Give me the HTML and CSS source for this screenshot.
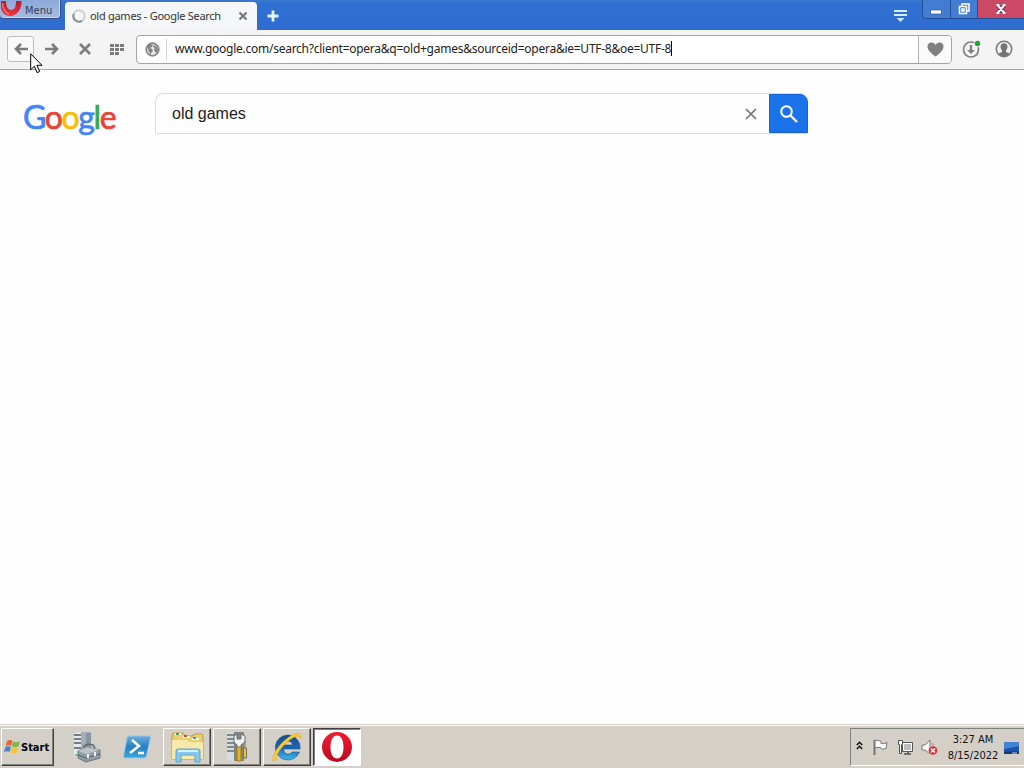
FILE: index.html
```html
<!DOCTYPE html>
<html lang="en">
<head>
  <meta charset="UTF-8" />
  <meta name="viewport" content="width=device-width, initial-scale=1" />
  <title>old games - Google Search</title>
  <link rel="stylesheet" href="styles.css">
</head>
<body>
  <div class="desktop">
    <!-- Tab bar -->
    <div class="titlebar">
      <button class="menu-btn">
        <svg width="22" height="18" viewBox="0 0 22 18">
          <defs>
            <linearGradient id="menuRed" x1="0" y1="0" x2="0" y2="1">
              <stop offset="0" stop-color="#b5202b" />
              <stop offset="1" stop-color="#ee343d" />
            </linearGradient>
          </defs>
          <path d="M1 1H6C6 6 8 10 11 10C15 10 16 6 16 1H21.500C22 9 17 16 10 16C5 16 1 12 1 7Z" fill="url(#menuRed)" />
          <path d="M2.500 3C2.500 8 5 13 9 14" fill="none" stroke="#f77e80" stroke-width="1.300" />
        </svg>
        <span>Menu</span>
      </button>
      <div class="tab">
        <svg width="16" height="16" viewBox="0 0 16 16" fill="none" stroke-width="2">
          <circle cx="8" cy="8" r="5.700" stroke="#d0d0d0" />
          <path d="M2.800 5.800A5.700 5.700 0 0 0 11 12.800" stroke="#909090" />
        </svg>
        <span class="tab-title">old games - Google Search</span>
        <svg class="tab-close" width="10" height="10" viewBox="0 0 10 10">
          <path d="M1.500 1.500l7 7M8.500 1.500l-7 7" stroke="#777" stroke-width="2.200" />
        </svg>
      </div>
      <svg class="new-tab" width="12" height="12" viewBox="0 0 12 12">
        <path d="M6 .5v11M.5 6h11" stroke="#e4f3ff" stroke-width="2.800" />
      </svg>
      <svg class="tab-menu" width="13" height="14" viewBox="0 0 13 14" fill="#d5eaff">
        <path d="M0 1h13v2H0zM0 5h13v2H0zM2.500 9h8l-4 4z" />
      </svg>
      <div class="window-btns">
        <button>
          <svg width="12" height="12" viewBox="0 0 12 12"><path d="M.5 7h11v4H.5z" fill="#fff" stroke="#24509b" stroke-width=".7" /></svg>
        </button>
        <button>
          <svg width="12" height="12" viewBox="0 0 12 12" fill="none">
            <path d="M4 3V1h7v7H9" stroke="#fff" stroke-width="1.500" />
            <path d="M1.500 3.500h7v7h-7zM4 6h2v2H4z" stroke="#fff" stroke-width="1.500" />
          </svg>
        </button>
        <button class="close-btn">
          <svg width="12" height="12" viewBox="0 0 12 12">
            <path d="M2.500 2l7 8M9.500 2l-7 8" stroke="#7a2845" stroke-width="4" />
            <path d="M2.500 2l7 8M9.500 2l-7 8M1.500 2h3M7.500 2h3M1.500 10h3M7.500 10h3" stroke="#fff" stroke-width="2" />
          </svg>
        </button>
      </div>
    </div>

    <!-- Address bar -->
    <div class="toolbar">
      <button class="nav-btn hovered">
        <svg width="14" height="12" viewBox="0 0 14 12"><path d="M7 1L2 6l5 5M2 6h12" fill="none" stroke="#7c7c7c" stroke-width="2.600" /></svg>
      </button>
      <button class="nav-btn forward">
        <svg width="14" height="12" viewBox="0 0 14 12"><path d="M7 1l5 5-5 5M12 6H0" fill="none" stroke="#7c7c7c" stroke-width="2.600" /></svg>
      </button>
      <button class="nav-btn">
        <svg width="12" height="12" viewBox="0 0 12 12"><path d="M1 1l10 10M11 1L1 11" stroke="#7c7c7c" stroke-width="2.600" /></svg>
      </button>
      <button class="nav-btn">
        <svg width="14" height="11" viewBox="0 0 14 11" fill="#7c7c7c">
          <path d="M0 0h4v3H0zM5 0h4v3H5zM10 0h4v3h-4zM0 4h4v3H0zM5 4h4v3H5zM10 4h4v3h-4zM0 8h4v3H0zM5 8h4v3H5z" />
        </svg>
      </button>
      <div class="address">
        <svg class="globe" width="15" height="15" viewBox="0 0 15 15">
          <circle cx="7.500" cy="7.500" r="6.300" fill="#e8e8e8" stroke="#858585" stroke-width="1.700" />
          <path d="M2 4l3-2 3 1-1 2-2 1 2 1 1 2-2 2v2L4 10 3 7zM9 3l3 2 1 3-1 3-2-1-1-3 1-1-2-1z" fill="#858585" />
        </svg>
        <div class="url">www.google.com/search?client=opera&amp;q=old+games&amp;sourceid=opera&amp;ie=UTF-8&amp;oe=UTF-8</div>
        <div class="bookmark">
          <svg width="17" height="15" viewBox="0 0 17 15">
            <path d="M8.500 14.500C5 12 .5 8.500.5 4.500C.5 0 6-.8 8.500 3C11-.8 16.500 0 16.500 4.500C16.500 8.500 12 12 8.500 14.500Z" fill="#808080" />
          </svg>
        </div>
      </div>
      <svg class="downloads" width="19" height="19" viewBox="0 0 19 19">
        <circle cx="9" cy="9.500" r="7.500" fill="none" stroke="#808080" stroke-width="1.700" />
        <path d="M7.800 5h2.400v5H13l-4 4-4-4h2.800z" fill="#808080" />
        <circle cx="15.500" cy="3.500" r="3.700" fill="#f3f3f3" />
        <circle cx="15.500" cy="3.500" r="2.700" fill="#1aaa2a" />
      </svg>
      <svg class="account" width="18" height="18" viewBox="0 0 18 18">
        <circle cx="9" cy="9" r="7.700" fill="#f3f3f3" stroke="#7c7c7c" stroke-width="1.600" />
        <path d="M5.500 6.500C5.500 2 12.500 2 12.500 6.500C12.500 8.500 11.800 9.500 11 10.300V12L14.500 13.500C11.500 17.500 6.500 17.500 3.500 13.500L7 12V10.300C6.200 9.500 5.500 8.500 5.500 6.500Z" fill="#747474" />
      </svg>
    </div>

    <!-- Search page -->
    <div class="page">
      <div class="logo"><span class="blue">G</span><span class="red">o</span><span class="yellow">o</span><span class="blue">g</span><span class="green">l</span><span class="red">e</span></div>
      <div class="search-box">
        <span class="query">old games</span>
        <svg class="clear" width="12" height="12" viewBox="0 0 12 12"><path d="M1 1l10 10M11 1L1 11" stroke="#70757a" stroke-width="1.700" /></svg>
        <button class="search-btn">
          <svg width="20" height="20" viewBox="0 0 20 20" fill="none" stroke="#fff">
            <circle cx="7.500" cy="7.500" r="5.300" stroke-width="2" />
            <path d="M11.500 11.500l6.500 6.500" stroke-width="2.300" />
          </svg>
        </button>
      </div>
    </div>

    <!-- Taskbar -->
    <div class="taskbar">
      <button class="start-btn">
        <svg width="17" height="16" viewBox="0 0 17 16">
          <path d="M3 2C5 .5 7 1 8.500 2L7.300 7C5.500 6 3.500 6 1.700 7Z" fill="#e96532" />
          <path d="M9.300 2.500C11.500 3.500 13.500 3.500 16 2L14.500 7.300C12.500 8.500 10 8.500 8 7.500Z" fill="#79b94a" />
          <path d="M1.400 8C3.500 7 5.200 7 7 8L5.700 12.800C4 12 2 12 0 13Z" fill="#4783cc" />
          <path d="M7.800 8.500C10 9.500 12.500 9.500 14.200 8.400L12.800 13.500C11 15 8.500 14.500 6.500 13.500Z" fill="#f5c62f" />
        </svg>
        <span>Start</span>
      </button>
      <div class="task-icon server">
        <svg width="30" height="33" viewBox="0 0 30 33">
          <path d="M8 1h11v26H8z" fill="#a5aeb5" />
          <path d="M14 2h5v24h-5z" fill="#89959e" />
          <path d="M2 2l7-1v27l-7-3z" fill="#e7eaec" />
          <path d="M2 4h7M2 8h7M2 12h7M2 17h7" stroke="#4d5860" stroke-width="1.500" />
          <path d="M3 24h4" stroke="#5dbb50" stroke-width="1.500" />
          <path d="M12 18v-3l4-2 5 1 2 3" fill="none" stroke="#5e6a73" stroke-width="1.600" />
          <path d="M6 20l9-4 13 3v8l-14 4-8-4z" fill="#929da5" stroke="#68747d" />
          <path d="M6 20l9-4 13 3-14 4z" fill="#bcc4ca" />
          <path d="M6 24l8 3 14-4" fill="none" stroke="#53616b" />
          <path d="M16 23v4M23 21v4" stroke="#eee" stroke-width="2" />
        </svg>
      </div>
      <div class="task-icon shell">
        <svg width="28" height="24" viewBox="0 0 28 24">
          <defs>
            <linearGradient id="shellBlue" x1="0" y1="0" x2="0" y2="1">
              <stop offset="0" stop-color="#69acdc" />
              <stop offset=".5" stop-color="#287fc1" />
              <stop offset="1" stop-color="#3ba8dc" />
            </linearGradient>
          </defs>
          <path d="M6 1h20q2 0 1.500 2l-4 18q-.5 2-2.500 2H2q-2 0-1.500-2L4 3q.5-2 2-2z" fill="url(#shellBlue)" stroke="#9bcbe8" />
          <path d="M9 5l7 6-9 7M15 18h6" fill="none" stroke="#fff" stroke-width="2.600" />
        </svg>
      </div>
      <div class="task-btn">
        <svg width="33" height="32" viewBox="0 0 33 32">
          <path d="M1 4q0-2 2-2h9l2 3h8l1-2h7q2 0 2 2v23H1z" fill="#e9cf72" stroke="#bc9b42" />
          <path d="M4 3h6M12 6h7M21 8h7" stroke="#fff9db" stroke-width="2" />
          <path d="M5 3h3" stroke="#4c9c58" stroke-width="2" />
          <path d="M13 5h3" stroke="#c84c3a" stroke-width="2" />
          <path d="M22 7h3" stroke="#4f8bd1" stroke-width="2" />
          <path d="M1 9h15l2 2h14v17H1z" fill="#f7e9a8" />
          <path d="M5 31V20q0-2 2-2h20q2 0 2 2v11h-5v-7H10v7z" fill="#86c8ed" stroke="#5ba4d2" />
          <path d="M7 20h20" stroke="#d5f2ff" stroke-width="2" />
        </svg>
      </div>
      <div class="task-btn">
        <svg width="24" height="32" viewBox="0 0 24 32">
          <path d="M8 1h11v29H8z" fill="#7e8582" />
          <path d="M2 2l7-1v30l-7-3z" fill="#d8dddd" />
          <path d="M2 4h7M2 8h7M2 12h7M2 16h7M2 20h7" stroke="#626d71" stroke-width="1.600" />
          <path d="M12 3v5h4V3l4 2v6l-4 3v5h-4v-5l-3-3V5z" fill="#edf0ee" stroke="#667077" />
          <path d="M12 16h4v14h-4z" fill="#e1b529" stroke="#a47b15" />
          <path d="M20 10v7M18.500 17h3v10h-3z" fill="#e8c23b" stroke="#77735d" />
        </svg>
      </div>
      <div class="task-btn">
        <svg width="30" height="32" viewBox="0 0 30 32">
          <defs>
            <linearGradient id="ieBlue" x1="0" y1="0" x2="0" y2="1">
              <stop offset="0" stop-color="#164b8d" />
              <stop offset=".5" stop-color="#1b65b4" />
              <stop offset="1" stop-color="#40b9ed" />
            </linearGradient>
          </defs>
          <path d="M15.500 4A12.500 12.500 0 0 1 28 18H11.500Q12 23 16 23Q19 23 20 21H27.500A12.500 12.500 0 1 1 15.500 4ZM11.500 14H20.500Q20 10 16 10Q12 10 11.500 14Z" fill="url(#ieBlue)" stroke="#17508a" stroke-width=".6" />
          <path d="M5 28C-2 35 0 22 10 12C19 3 30-2 29 8C28 3 21 5 13 13C6 20 3 27 5 28Z" fill="#f7cc35" stroke="#e1ab21" stroke-width=".6" />
        </svg>
      </div>
      <div class="task-btn active">
        <svg width="32" height="32" viewBox="0 0 32 32">
          <defs>
            <linearGradient id="operaRed" x1="0" y1="0" x2="0" y2="1">
              <stop offset="0" stop-color="#f51b32" />
              <stop offset="1" stop-color="#b80b21" />
            </linearGradient>
          </defs>
          <path d="M16 1A15 15 0 1 0 16 31A15 15 0 1 0 16 1ZM16 4.500C20 4.500 22.500 9 22.500 16S20 27.500 16 27.500S9.500 23 9.500 16S12 4.500 16 4.500Z" fill="url(#operaRed)" fill-rule="evenodd" />
        </svg>
      </div>

      <div class="tray">
        <svg class="chevrons" width="7" height="9" viewBox="0 0 7 9"><path d="M.8 4l2.700-2.700L6.200 4M.8 8l2.700-2.700L6.200 8" fill="none" stroke="#111" stroke-width="1.500" /></svg>
        <svg class="flag" width="17" height="17" viewBox="0 0 17 17">
          <path d="M2.500 1v15" stroke="#777" stroke-width="2" />
          <path d="M3 1.500q3-1 6 1v2q3 1 6-1l-1 6q-3 2-6-1Q5 8 3 9z" fill="#fff" stroke="#777" />
        </svg>
        <svg class="network" width="17" height="17" viewBox="0 0 17 17">
          <path d="M5.500 3.500h10v9h-10z" fill="#bbb" stroke="#555" />
          <path d="M6.500 4.500h8v7h-8z" fill="none" stroke="#fff" />
          <path d="M7 15h7M11 13v2" stroke="#555" stroke-width="1.600" />
          <path d="M1.500 1.500h4v4h-1v9h-2v-9h-1z" fill="#fff" stroke="#555" />
        </svg>
        <svg class="sound" width="18" height="17" viewBox="0 0 18 17">
          <path d="M1 6h3l5-5v14l-5-4H1z" fill="#f5f5f5" stroke="#777" />
          <path d="M11 4q2 2 1 4" fill="none" stroke="#888" />
          <circle cx="12" cy="11.500" r="4.700" fill="#d92f35" stroke="#eee" stroke-width=".6" />
          <path d="M10 9.500l4 4M14 9.500l-4 4" stroke="#fff" stroke-width="1.600" />
        </svg>
        <div class="clock">
          <div>3:27 AM</div>
          <div>8/15/2022</div>
        </div>
        <svg class="show-desktop" width="15" height="13" viewBox="0 0 15 13">
          <path d="M0 0h15v11H0z" fill="#1d55ae" />
          <path d="M0 0h15v4L0 7z" fill="#4682d2" />
          <path d="M0 9.500h15V12H0z" fill="#183867" />
          <path d="M8 11h5" stroke="#c7dcf4" />
        </svg>
      </div>
    </div>

    <svg class="cursor" width="13" height="21" viewBox="0 0 13 21">
      <path d="M.7.8v16l3.600-3.500 2.800 6.400 2.600-1.200-2.800-6.200H12z" fill="#fff" stroke="#000" />
    </svg>
  </div>
</body>
</html>
```
FILE: styles.css
```css
* {
  box-sizing: border-box;
}
body {
  margin: 0;
  font-family: "DejaVu Sans Condensed", "DejaVu Sans", sans-serif;
  color: #111;
}
button {
  border: none;
  background: none;
  padding: 0;
  font-family: inherit;
}
svg {
  display: block;
  flex-shrink: 0;
}
.desktop {
  position: relative;
  display: flex;
  flex-direction: column;
  width: 1024px;
  height: 768px;
  overflow: hidden;
  background: #fefefe;
}

/* tab bar */
.titlebar {
  display: flex;
  height: 30px;
  background: linear-gradient(#3c78ce 0, #2f70d2 4px, #2e6dcf 100%);
}
.menu-btn {
  display: flex;
  width: 61px;
  height: 19px;
  border: 1px solid #34518d;
  border-top: none;
  border-left: none;
  border-radius: 0 0 4px 4px;
  background: linear-gradient(#8caadd, #a9bbdc);
  box-shadow: inset -1px -1px #c9d8f1;
  color: #323c59;
  font-size: 11px;
  line-height: 21px;
}
.menu-btn span {
  margin-left: 3px;
}
.tab {
  display: flex;
  align-items: center;
  width: 192px;
  height: 28px;
  margin: 2px 0 0 4px;
  padding: 0 9px 0 6px;
  border-radius: 4px 4px 0 0;
  background: #f5f6f7;
  color: #333;
}
.tab-title {
  margin: -2px 0 0 3px;
  font-family: "Noto Sans", sans-serif;
  font-size: 11px;
  letter-spacing: -0.28px;
  white-space: nowrap;
}
.tab-close {
  margin-left: auto;
}
.new-tab {
  margin: 10px 0 0 10px;
}
.tab-menu {
  margin: 9px 15px 0 auto;
}
.window-btns {
  display: flex;
  width: 102px;
  height: 19px;
  border: 1px solid #244f98;
  border-top: none;
  border-right: none;
  border-radius: 0 0 0 4px;
  overflow: hidden;
}
.window-btns button {
  display: flex;
  justify-content: center;
  width: 28px;
  padding-top: 3px;
  border-right: 1px solid #244f98;
  background: #427dd2;
}
.window-btns .close-btn {
  width: 46px;
  border: none;
  background: #cb4965;
}

/* address bar */
.toolbar {
  display: flex;
  align-items: center;
  height: 40px;
  padding: 0 11px 1px 7px;
  border-bottom: 1px solid #a9a9a9;
  background: #f4f4f4;
}
.nav-btn {
  display: flex;
  align-items: center;
  justify-content: center;
  width: 27px;
  height: 26px;
  margin-right: 5px;
}
.nav-btn.hovered {
  border: 1px solid #bdbdbd;
  border-radius: 3px;
  background: #f9f9f9;
}
.nav-btn.forward {
  padding-right: 2px;
}
.address {
  display: flex;
  align-items: center;
  width: 816px;
  height: 29px;
  margin-left: 1px;
  border: 1px solid #a4a4a4;
  border-radius: 4px;
  background: #fff;
}
.globe {
  margin-left: 8px;
}
.url {
  height: 21px;
  margin-left: 6px;
  padding-left: 8px;
  border-left: 1px solid #d4d4d4;
  font-family: "Noto Sans", sans-serif;
  font-size: 12px;
  letter-spacing: -0.26px;
  line-height: 19px;
  white-space: nowrap;
  color: #222;
}
.url::after {
  content: "";
  display: inline-block;
  width: 1px;
  height: 15px;
  background: #000;
  vertical-align: -3px;
}
.bookmark {
  display: flex;
  align-items: center;
  justify-content: center;
  width: 33px;
  height: 27px;
  margin-left: auto;
  border-left: 1px solid #b2b2b2;
  border-radius: 0 3px 3px 0;
  background: #fafafa;
}
.downloads {
  margin-left: 10px;
}
.account {
  margin-left: auto;
}

/* search page */
.page {
  flex: 1;
  display: flex;
  align-items: flex-start;
  padding: 23px 0 0 23px;
}
.logo {
  width: 132px;
  font-family: Lato, sans-serif;
  font-size: 32px;
  letter-spacing: -1.4px;
  line-height: 48px;
  -webkit-text-stroke: 0.7px;
}
.blue { color: #4285f4; }
.red { color: #ea4335; }
.yellow { color: #fbbc05; }
.green { color: #34a853; }
.search-box {
  display: flex;
  align-items: center;
  width: 653px;
  height: 41px;
  border: 1px solid #dadce0;
  border-right: none;
  border-radius: 8px 8px 0 2px;
}
.query {
  margin-left: 16px;
  font-family: "Liberation Sans", Arial, sans-serif;
  font-size: 16px;
  color: #202124;
}
.clear {
  margin: 0 12px 0 auto;
}
.search-btn {
  display: flex;
  align-items: center;
  justify-content: center;
  width: 39px;
  height: 39px;
  border: 1px solid #1764d4;
  border-radius: 0 8px 0 0;
  background: #1a73e8;
}

/* taskbar */
.taskbar {
  display: flex;
  height: 44px;
  padding-top: 3px;
  border-top: 1px solid #d4d0c8;
  background: #d4d0c8;
  box-shadow: inset 0 1px #fff;
}
.start-btn {
  display: flex;
  align-items: center;
  width: 53px;
  height: 38px;
  margin-left: 1px;
  padding-left: 2px;
  border: 1px solid #fff;
  border-right-color: #404040;
  border-bottom-color: #404040;
  box-shadow: inset -1px -1px #808080;
  font-size: 11px;
  font-weight: bold;
  color: #000;
}
.task-icon {
  display: flex;
  align-items: center;
  justify-content: center;
  width: 50px;
  height: 38px;
}
.server {
  margin-left: 8px;
  margin-right: 1px;
}
.shell {
  padding-right: 2px;
}
.task-btn {
  display: flex;
  align-items: center;
  justify-content: center;
  width: 48px;
  height: 38px;
  margin-right: 2px;
  border: 1px solid #fff;
  border-right-color: #404040;
  border-bottom-color: #404040;
  box-shadow: inset -1px -1px #808080;
}
.task-btn.active {
  border-color: #404040 #fff #fff #404040;
  background: #fff;
  box-shadow: inset 1px 1px #808080;
}
.tray {
  display: flex;
  width: 174px;
  height: 38px;
  margin-left: auto;
  padding-left: 5px;
  border: 1px solid #808080;
  border-right: none;
  border-bottom-color: #fff;
}
.chevrons {
  margin-top: 12px;
}
.flag {
  margin: 10px 0 0 9px;
}
.network {
  margin: 10px 0 0 8px;
}
.sound {
  margin: 10px 0 0 7px;
}
.clock {
  width: 56px;
  margin: 3px 0 0 6px;
  font-size: 11px;
  line-height: 16px;
  text-align: center;
  white-space: nowrap;
}
.show-desktop {
  margin: 13px 0 0 3px;
}

/* mouse pointer, over the toolbar */
.cursor {
  position: absolute;
  left: 30px;
  top: 53px;
}
```
